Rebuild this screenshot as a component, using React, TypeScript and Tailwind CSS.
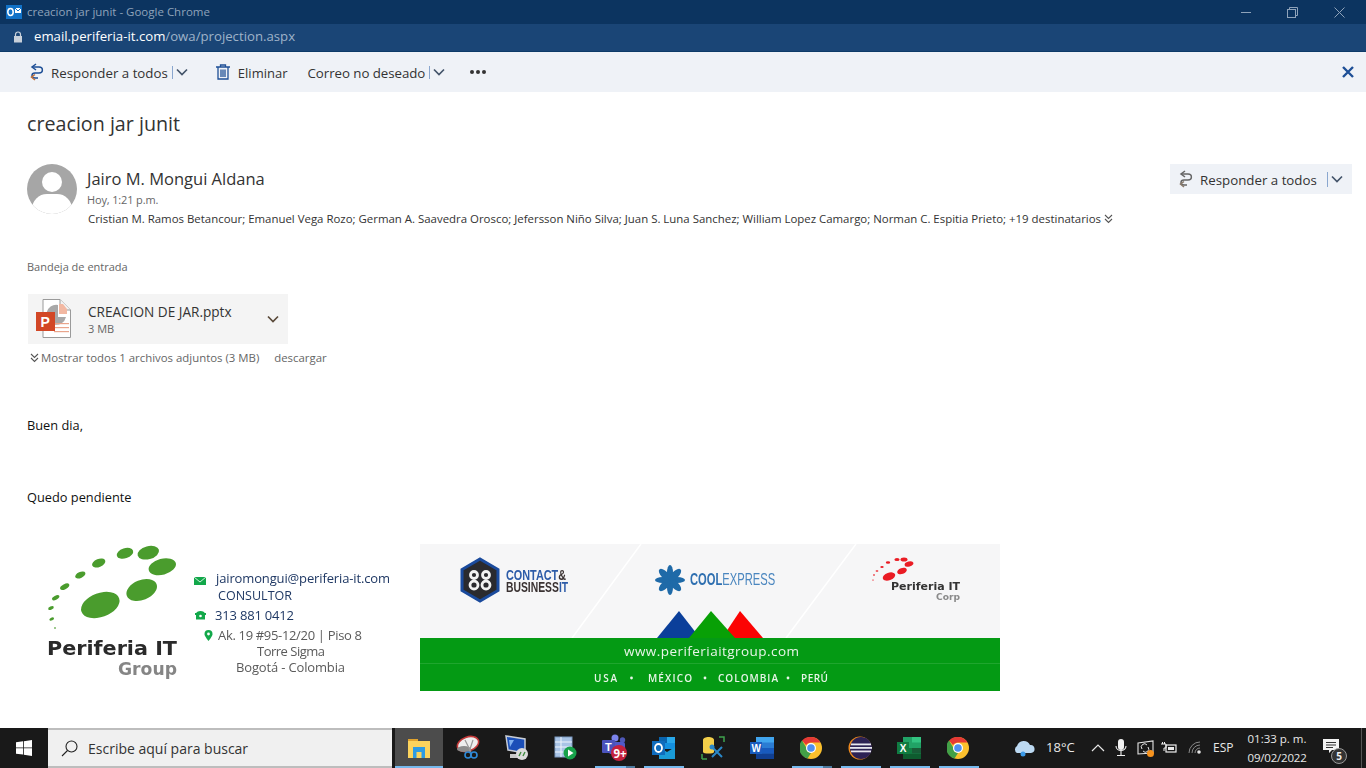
import React from "react";

const F = "[font-family:'Open_Sans','Noto_Sans',sans-serif]";

function ReplyAll({ c1 = "#1e4f96", c2 = "#c0703a" }: { c1?: string; c2?: string }) {
  return (
    <svg width="16" height="18" viewBox="0 0 16 18" fill="none" strokeWidth="1.5">
      <path d="M7 1 L3 4 L7 7" stroke={c1} />
      <path d="M3.500 4 H10 C14.500 4 14.500 10 10 10 H6 C2 10 2 15 6 15 H9" stroke={c1} />
      <path d="M6 11.500 L2.500 14 L6 17" stroke={c2} />
    </svg>
  );
}

function Chevron({ color = "#44546a", w = 12 }: { color?: string; w?: number }) {
  return (
    <svg width={w} height="8" viewBox="0 0 12 8" fill="none" stroke={color} strokeWidth="1.7">
      <path d="M1 1.500 L6 6.500 L11 1.500" />
    </svg>
  );
}

function DoubleChevron({ color = "#555" }: { color?: string }) {
  return (
    <svg width="9" height="10" viewBox="0 0 9 10" fill="none" stroke={color} strokeWidth="1.100">
      <path d="M1 1 L4.500 4.500 L8 1" />
      <path d="M1 5 L4.500 8.500 L8 5" />
    </svg>
  );
}

function PptIcon() {
  return (
    <svg width="36" height="40" viewBox="0 0 36 40">
      <path d="M7 .5 H24 L34.500 11 V38.500 H7 Z" fill="#fff" stroke="#9a9a9a" />
      <path d="M24 .5 V11 H34.500" fill="#f3f3f3" stroke="#9a9a9a" />
      <path d="M22 6 A10 10 0 1 0 30 18 H22 Z" fill="#a8a8a8" />
      <path d="M23 5 H27 L31 10 V15 H23 Z" fill="#f2b8a2" />
      <rect x="18" y="24" width="15" height="1.200" fill="#e9a58c" />
      <rect x="18" y="28" width="15" height="1.200" fill="#e9a58c" />
      <rect x="18" y="32" width="15" height="1.200" fill="#e9a58c" />
      <rect x="0" y="13" width="19" height="19" fill="#d24726" />
      <text x="4.500" y="27.500" fontSize="14" fontWeight="700" fill="#fff" fontFamily="'Liberation Sans',sans-serif">P</text>
    </svg>
  );
}

function Signature() {
  const green = "#4a9c2d";
  const ell: [number, number, number, number, number][] = [
    [100.3, 605, 20, 12, -20],
    [141.7, 590, 16, 10, -22],
    [162.3, 566.7, 14, 8, -15],
    [148.3, 552.7, 11, 6.5, -15],
    [125, 553.3, 8.5, 5, -18],
    [98.7, 563, 7, 4, -22],
    [80.3, 575, 5.5, 3, -25],
    [64.7, 586.7, 5, 2.5, -28],
    [55.7, 597.7, 4, 2, -28],
    [51, 608, 3, 1.7, -25],
    [51.7, 619, 2.5, 1.5, -25],
    [55, 628, 1, 0.8, 0],
  ];
  return (
    <svg width="390" height="160" viewBox="27 535 390 160" className="shrink-0 blur-[0.4px]">
      {ell.map(([x, y, rx, ry, r], i) => (
        <ellipse key={i} cx={x} cy={y} rx={rx} ry={ry} fill={green} transform={`rotate(${r} ${x} ${y})`} />
      ))}
      <g fontFamily="'DejaVu Sans',sans-serif" fontWeight="700">
        <text x="47" y="655" fontSize="20" fill="#2a2a2a" textLength="130" lengthAdjust="spacingAndGlyphs">Periferia IT</text>
        <text x="118" y="675" fontSize="18" fill="#858585" textLength="59" lengthAdjust="spacingAndGlyphs">Group</text>
      </g>
      <g fontFamily="'Open Sans',sans-serif">
        <text x="216" y="583" fontSize="13" fill="#1f3864" textLength="174">jairomongui@periferia-it.com</text>
        <text x="218" y="600" fontSize="12.5" fill="#1f3864" textLength="74">CONSULTOR</text>
        <text x="215" y="620" fontSize="13" fill="#1f3864" textLength="79">313 881 0412</text>
        <text x="218" y="640" fontSize="13" fill="#5a5a5a" textLength="144">Ak. 19 #95-12/20 | Piso 8</text>
        <text x="257" y="656" fontSize="13" fill="#5a5a5a" textLength="68">Torre Sigma</text>
        <text x="236" y="672" fontSize="13" fill="#5a5a5a" textLength="109">Bogotá - Colombia</text>
      </g>
      <rect x="194" y="577" width="12" height="8" fill="#12a84a" />
      <path d="M194 577 L200 582 L206 577" fill="none" stroke="#fff" strokeWidth="0.8" />
      <path d="M196 614 C196 610 205 610 205 614 L205 619.500 H196 Z M195 613 H206 V615 H195 Z" fill="#12a84a" />
      <circle cx="200.500" cy="616" r="1.300" fill="#fff" />
      <path d="M208.500 641 C205 636.500 204.500 635 204.500 634 A4 4 0 0 1 212.500 634 C212.500 635 212 636.500 208.500 641 Z" fill="#12a84a" />
      <circle cx="208.500" cy="634" r="1.400" fill="#fff" />
    </svg>
  );
}

function Banner() {
  const petals = [0, 45, 90, 135, 180, 225, 270, 315];
  return (
    <svg width="580" height="147" viewBox="420 544 580 147" className="shrink-0 blur-[0.35px]">
      <rect x="420" y="544" width="580" height="147" fill="#f6f6f7" />
      <path d="M641 544 L572 638 M856 544 L786 638" stroke="#fff" strokeWidth="1.500" />
      <path d="M679 611 L657 638 H700 Z" fill="#0b3f9a" />
      <path d="M740 611 L722 638 H763 Z" fill="#fb0303" />
      <path d="M711 611 L689 638 H735 Z" fill="#08a006" />
      <rect x="420" y="638" width="580" height="53" fill="#049a14" />
      <rect x="420" y="663" width="580" height="1" fill="#1fa62e" />
      <path d="M480 559 L498 569.500 V590.500 L480 601 L462 590.500 V569.500 Z" fill="#2a2a2e" stroke="#1a4a9c" strokeWidth="3" />
      <g fill="none" stroke="#f2f2f2" strokeWidth="2.800">
        <circle cx="474" cy="575" r="3.500" />
        <circle cx="474" cy="585" r="4" />
        <circle cx="486" cy="575" r="3.500" />
        <circle cx="486" cy="585" r="4" />
      </g>
      <g fontFamily="'Liberation Sans',sans-serif" fontSize="14" fontWeight="700">
        <text transform="translate(506 579.500) scale(0.776 1)">
          <tspan fill="#2d5ca8">CONTACT</tspan>
          <tspan fill="#3a3232">&amp;</tspan>
        </text>
        <text transform="translate(506 591.500) scale(0.74 1)">
          <tspan fill="#3a3232">BUSINESS</tspan>
          <tspan fill="#2d5ca8">IT</tspan>
        </text>
      </g>
      {petals.map((r) => (
        <ellipse key={r} cx="677.500" cy="580" rx="7.500" ry={r % 90 === 0 ? 3 : 3.6} fill="#1f6aa8" transform={`rotate(${r} 670 580)`} />
      ))}
      <text transform="translate(690 585) scale(0.7 1)" fontFamily="'Liberation Sans',sans-serif" fontSize="16">
        <tspan fontWeight="700" fill="#2e6fb0">COOL</tspan>
        <tspan fill="#4a86bf">EXPRESS</tspan>
      </text>
      <g fill="#ea1c24">
        <ellipse cx="889" cy="576.500" rx="6.500" ry="3.700" transform="rotate(-20 889 576.500)" />
        <ellipse cx="902" cy="571" rx="5" ry="3" transform="rotate(-20 902 571)" />
        <ellipse cx="909" cy="564" rx="4.500" ry="2.500" transform="rotate(-15 909 564)" />
        <ellipse cx="904" cy="559.500" rx="3.500" ry="2" />
        <ellipse cx="897" cy="559.500" rx="2.600" ry="1.500" />
        <ellipse cx="888" cy="562.500" rx="2.200" ry="1.200" />
        <ellipse cx="882" cy="567" rx="1.700" ry="1" />
        <ellipse cx="877" cy="571" rx="1.400" ry="0.800" />
        <ellipse cx="874" cy="575" rx="1" ry="0.700" />
        <ellipse cx="873" cy="580" rx="0.800" ry="0.600" />
      </g>
      <g fontFamily="'DejaVu Sans',sans-serif" fontWeight="700">
        <text x="891" y="589.500" fontSize="11" fill="#333" textLength="69" lengthAdjust="spacingAndGlyphs">Periferia IT</text>
        <text x="936" y="600" fontSize="9.500" fill="#8a8a8a" textLength="24" lengthAdjust="spacingAndGlyphs">Corp</text>
      </g>
      <g fontFamily="'Open Sans',sans-serif" fill="#e8f5e8" fontWeight="500">
        <text x="624" y="656" fontSize="13.500" textLength="175">www.periferiaitgroup.com</text>
      </g>
      <g fontFamily="'Open Sans',sans-serif" fill="#e8f5e8" fontWeight="600" fontSize="10">
        <text x="594" y="682" textLength="23">USA</text>
        <text x="648" y="682" textLength="44">MÉXICO</text>
        <text x="718" y="682" textLength="60">COLOMBIA</text>
        <text x="801" y="682" textLength="27">PERÚ</text>
      </g>
      <g fill="#e8f5e8">
        <circle cx="631.500" cy="678" r="1.400" />
        <circle cx="705" cy="678" r="1.400" />
        <circle cx="788" cy="678" r="1.400" />
      </g>
    </svg>
  );
}

function TbIcon({ children, on, wide }: { children: React.ReactNode; on?: boolean; wide?: boolean }) {
  return (
    <div className="relative flex h-10 w-[49.1px] shrink-0 items-center justify-center">
      {children}
      {on && <div className="absolute bottom-0 left-[5px] h-[2px] w-[40px] bg-[#76b9ed]" />}
      {wide && <div className="absolute bottom-0 left-[36px] h-[2px] w-[9px] bg-[#4d7a9e]" />}
    </div>
  );
}

const Icons = {
  snip: (
    <svg width="24" height="26" viewBox="0 0 24 26">
      <ellipse cx="12" cy="9" rx="11" ry="7" transform="rotate(-20 12 9)" fill="#eee" stroke="#c43a3a" strokeWidth="1.600" />
      <ellipse cx="8" cy="14" rx="7" ry="3" fill="#8c8c8c" />
      <path d="M9 5 L15 17 M17 5 L13 17" stroke="#999" strokeWidth="1.200" />
      <circle cx="12" cy="20" r="3" fill="none" stroke="#2e8ad8" strokeWidth="1.600" />
      <circle cx="18" cy="20" r="3" fill="none" stroke="#2e8ad8" strokeWidth="1.600" />
    </svg>
  ),
  rdp: (
    <svg width="24" height="26" viewBox="0 0 24 26">
      <path d="M1 1 L20 4 V18 L3 15 Z" fill="#1b4fb8" stroke="#c8cdd5" strokeWidth="1.500" />
      <path d="M4 5 L9 5 L5 12 Z" fill="#7fb0f0" />
      <path d="M5 19 H14 V23 H5 Z" fill="#c9c9c9" />
      <circle cx="17" cy="19" r="6" fill="#dcdcdc" />
      <path d="M14 21 L16 17 M18 21 L20 17" stroke="#3f8a3f" strokeWidth="1.400" />
    </svg>
  ),
  sheet: (
    <svg width="24" height="24" viewBox="0 0 24 24">
      <rect x="1" y="1" width="17" height="20" fill="#a9c4e6" stroke="#7d99bf" />
      <path d="M1 6 H18 M1 11 H18 M1 16 H18 M7 1 V21" stroke="#eef4fb" />
      <circle cx="16" cy="17" r="6.500" fill="#17a24a" />
      <path d="M14 13.500 L19.500 17 L14 20.500 Z" fill="#fff" />
    </svg>
  ),
  teams: (
    <svg width="28" height="28" viewBox="0 0 28 28">
      <circle cx="14" cy="4" r="3.500" fill="#7b83eb" />
      <circle cx="21.500" cy="6" r="2.700" fill="#4f58b8" />
      <rect x="8" y="8" width="16" height="12" rx="2" fill="#5059c9" />
      <rect x="1" y="6" width="13" height="13" rx="1" fill="#4b53bc" />
      <text x="4" y="16.500" fontSize="11" fontWeight="700" fill="#fff" fontFamily="'Liberation Sans',sans-serif">T</text>
      <circle cx="18" cy="19" r="8" fill="#c4213e" />
      <text x="12.500" y="23.500" fontSize="11.500" fontWeight="700" fill="#fff" fontFamily="'Open Sans',sans-serif">9+</text>
    </svg>
  ),
  outlook: (
    <svg width="24" height="24" viewBox="0 0 24 24">
      <rect x="7" y="1" width="16" height="12" fill="#1490df" />
      <rect x="7" y="1" width="8" height="6" fill="#0a64ad" />
      <rect x="15" y="1" width="8" height="6" fill="#28a8ea" />
      <path d="M7 11 L15 16 L23 11 V23 H7 Z" fill="#1a9bd7" />
      <rect x="0" y="5" width="13" height="14" fill="#0f6cbd" />
      <ellipse cx="6.500" cy="12" rx="3.500" ry="4" fill="none" stroke="#fff" strokeWidth="1.800" />
    </svg>
  ),
  db: (
    <svg width="24" height="24" viewBox="0 0 24 24">
      <path d="M2 4 C2 0 13 0 13 4 V16 C13 18 2 18 2 16 Z" fill="#f3cf4a" />
      <path d="M1 23 V18 M1 23 H6 M18 1 H23 V6" fill="none" stroke="#3fa34d" strokeWidth="1.500" />
      <path d="M11 21 L21 11 M11 11 L21 21" stroke="#2a88c8" strokeWidth="2" />
      <circle cx="11" cy="11" r="2.500" fill="#2a88c8" />
    </svg>
  ),
  word: (
    <svg width="24" height="22" viewBox="0 0 24 22">
      <rect x="6" y="0" width="18" height="22" fill="#2b7cd3" />
      <rect x="6" y="0" width="18" height="5.500" fill="#41a5ee" />
      <rect x="6" y="11" width="18" height="5.500" fill="#185abd" />
      <rect x="6" y="16.500" width="18" height="5.500" fill="#103f91" />
      <rect x="0" y="5" width="12" height="12" fill="#1a5cbd" />
      <text x="1.500" y="15" fontSize="10" fontWeight="700" fill="#fff" fontFamily="'Liberation Sans',sans-serif">W</text>
    </svg>
  ),
  excel: (
    <svg width="24" height="22" viewBox="0 0 24 22">
      <rect x="6" y="0" width="18" height="22" fill="#21a366" />
      <rect x="15" y="0" width="9" height="5.500" fill="#33c481" />
      <rect x="6" y="11" width="9" height="5.500" fill="#107c41" />
      <rect x="15" y="11" width="9" height="5.500" fill="#185c37" />
      <rect x="6" y="16.500" width="18" height="5.500" fill="#0e5c2f" />
      <rect x="0" y="5" width="12" height="12" fill="#107c41" />
      <text x="2.800" y="15" fontSize="10" fontWeight="700" fill="#fff" fontFamily="'Liberation Sans',sans-serif">X</text>
    </svg>
  ),
  chrome: (
    <svg width="22" height="22" viewBox="0 0 22 22">
      <circle cx="11" cy="11" r="11" fill="#fbc02d" />
      <path d="M11 0 A11 11 0 0 1 20.500 5.500 H11 A5.500 5.500 0 0 0 6 8 L2 3.500 A11 11 0 0 1 11 0 Z" fill="#e53935" />
      <path d="M2 3.500 L6.500 11 A5 5 0 0 0 11 16 L7.500 21.500 A11 11 0 0 1 2 3.500 Z" fill="#43a047" />
      <circle cx="11" cy="11" r="5" fill="#fff" />
      <circle cx="11" cy="11" r="3.800" fill="#4f8ff0" />
    </svg>
  ),
  eclipse: (
    <svg width="24" height="24" viewBox="0 0 24 24">
      <circle cx="12" cy="12" r="11.500" fill="#f08a1d" />
      <circle cx="13" cy="12" r="11" fill="#2c2255" />
      <rect x="3" y="7.500" width="20" height="1.800" fill="#e8e8f0" />
      <rect x="2" y="11" width="22" height="1.800" fill="#e8e8f0" />
      <rect x="3" y="14.500" width="20" height="1.800" fill="#e8e8f0" />
    </svg>
  ),
};

function TrayIcons() {
  return (
    <div className="flex h-10 flex-1 items-center text-[#e8e8e8]">
      <svg width="24" height="18" viewBox="0 0 24 18" className="ml-[29px]">
        <path d="M5 14 A4 4 0 0 1 5 7 A7 7 0 0 1 18 6 A4 4 0 0 1 19 14 Z" fill="#bcd9f2" />
        <circle cx="11" cy="15" r="2.500" fill="#3b9ae8" />
      </svg>
      <span className="ml-[10px] w-[30px] text-[13px]">18°C</span>
      <svg width="14" height="8" viewBox="0 0 14 8" fill="none" stroke="#e8e8e8" strokeWidth="1.200" className="ml-[15px]">
        <path d="M1 7 L7 1 L13 7" />
      </svg>
      <svg width="12" height="18" viewBox="0 0 12 18" className="ml-[10px]">
        <rect x="3" y="0" width="6" height="11" rx="3" fill="#f2f2f2" />
        <path d="M1 7 C1 13 11 13 11 7 M6 12 V16 M2 16.500 H10" fill="none" stroke="#f2f2f2" strokeWidth="1.100" />
      </svg>
      <svg width="18" height="17" viewBox="0 0 18 17" className="ml-[10px]">
        <path d="M1 3 L16 1 V13 L1 14 Z" fill="none" stroke="#e6e6e6" strokeWidth="1.100" />
        <path d="M5 9 A3 3 0 0 1 10 5 M11 7 A3 3 0 0 1 6 11" fill="none" stroke="#e6e6e6" />
        <circle cx="13.500" cy="13.500" r="3.500" fill="#f7931e" />
      </svg>
      <svg width="16" height="12" viewBox="0 0 16 12" className="ml-[6px]">
        <rect x="5" y="3" width="10" height="7" fill="none" stroke="#eee" strokeWidth="1.200" />
        <rect x="7" y="5" width="6" height="3" fill="#eee" />
        <path d="M0 2 H5 V6 H3 V9 M1.500 0 V2 M3.500 0 V2" fill="none" stroke="#eee" />
      </svg>
      <svg width="14" height="14" viewBox="0 0 14 14" fill="none" stroke="#8a8a8a" strokeWidth="1" className="ml-[11px]">
        <path d="M1 12 A11 11 0 0 1 12 1 M4 12 A8 8 0 0 1 12 4 M7 12 A5 5 0 0 1 12 7" />
        <circle cx="11" cy="11" r="1.800" fill="#e6e6e6" stroke="none" />
      </svg>
      <span className="ml-[11px] w-[22px] text-[12px]">ESP</span>
      <div className="ml-[12px] flex w-[60px] flex-col items-center text-[11.500px] leading-[19px]">
        <span className="whitespace-nowrap">01:33 p. m.</span>
        <span className="whitespace-nowrap tracking-[-0.2px]">09/02/2022</span>
      </div>
      <div className="relative ml-[16px] h-10 w-[26px]">
        <svg width="17" height="15" viewBox="0 0 17 15" className="absolute left-0 top-[11px]">
          <path d="M0 0 H16 V11 H9 L6 14 V11 H0 Z" fill="#f4f4f4" />
          <path d="M3 3.500 H13 M3 6 H13 M3 8.500 H10" stroke="#333" />
        </svg>
        <div className="absolute left-[8px] top-[20px] flex h-[16px] w-[16px] items-center justify-center rounded-full border border-[#999] bg-[#333] text-[10px] font-bold text-[#eee]">5</div>
      </div>
      <div className="ml-[12px] h-10 w-px bg-[#555]" />
    </div>
  );
}

export default function App() {
  return (
    <div className={`flex h-screen w-full flex-col overflow-hidden bg-white ${F}`}>
      <div className="flex h-6 shrink-0 items-center bg-[#0c3460]">
        <svg width="16" height="16" viewBox="0 0 16 16" className="ml-[6px]">
          <rect x="0" y="1" width="16" height="14" fill="#1172c8" />
          <rect x="9" y="4" width="6" height="5" fill="#fff" />
          <path d="M9 4 L12 7 L15 4" fill="none" stroke="#1172c8" />
          <ellipse cx="4.500" cy="8" rx="2.700" ry="3.500" fill="none" stroke="#fff" strokeWidth="1.500" />
        </svg>
        <span className="ml-[5px] text-[11.500px] text-[#8fa3ba]">creacion jar junit - Google Chrome</span>
        <div className="ml-auto flex items-center gap-[36px] pr-[21px]">
          <div className="h-px w-[10px] bg-[#8fa3ba]" />
          <svg width="11" height="11" viewBox="0 0 11 11" fill="none" stroke="#8fa3ba">
            <rect x="0.500" y="2.500" width="8" height="8" />
            <path d="M2.500 2.500 V0.500 H10.500 V8.500 H8.500" />
          </svg>
          <svg width="11" height="11" viewBox="0 0 11 11" fill="none" stroke="#8fa3ba">
            <path d="M0.500 0.500 L10.500 10.500 M10.500 0.500 L0.500 10.500" />
          </svg>
        </div>
      </div>
      <div className="flex h-[28px] shrink-0 items-center border-b border-[#0d3a68] bg-[#1a4576] pb-[2px]">
        <svg width="10" height="12" viewBox="0 0 10 12" className="ml-[13px]">
          <rect x="1" y="5" width="8" height="6.500" fill="#c8d0da" />
          <path d="M2.500 5 V3.500 A2.500 2.500 0 0 1 7.500 3.500 V5" fill="none" stroke="#c8d0da" strokeWidth="1.200" />
        </svg>
        <span className="ml-[11px] text-[13.200px] text-white">email.periferia-it.com<span className="text-[#9fb3c9]">/owa/projection.aspx</span></span>
      </div>

      <div className="flex h-10 shrink-0 items-center bg-[#eff2f7] text-[13.300px] text-[#333]">
        <div className="ml-[29px]"><ReplyAll /></div>
        <span className="ml-[6px] pt-[3px]">Responder a todos</span>
        <div className="ml-[4px] h-[13px] w-px bg-[#8aa7cf]" />
        <div className="ml-[3px]"><Chevron /></div>
        <svg width="14" height="16" viewBox="0 0 14 16" className="ml-[28px]" fill="none" stroke="#1e4f96" strokeWidth="1.300">
          <path d="M0 3 H14 M4.500 3 V1 H9.500 V3 M2 3 V15 H12 V3 M5 5.500 V13 M7 5.500 V13 M9 5.500 V13" />
        </svg>
        <span className="ml-[8px] pt-[3px] text-[13px]">Eliminar</span>
        <span className="ml-[20px] pt-[3px] tracking-[-0.05px]">Correo no deseado</span>
        <div className="ml-[4px] h-[13px] w-px bg-[#8aa7cf]" />
        <div className="ml-[3px]"><Chevron /></div>
        <div className="ml-[25px] flex gap-[2px]">
          <div className="h-[4px] w-[4px] rounded-full bg-[#333]" />
          <div className="h-[4px] w-[4px] rounded-full bg-[#333]" />
          <div className="h-[4px] w-[4px] rounded-full bg-[#333]" />
        </div>
        <svg width="12" height="12" viewBox="0 0 12 12" className="ml-auto mr-[12px]" stroke="#1e4f96" strokeWidth="2.400">
          <path d="M1 1 L11 11 M11 1 L1 11" />
        </svg>
      </div>

      <div className="flex min-h-0 flex-1 flex-col pl-[27px]">
        <div className="mt-[17px] h-[29px] text-[19.700px] leading-[29px] text-[#333]">creacion jar junit</div>
        <div className="mt-[26px] flex items-start">
          <div className="relative h-[50px] w-[50px] shrink-0 overflow-hidden rounded-full bg-[#a6a6a6]">
            <div className="absolute left-[15px] top-[8px] h-[20px] w-[20px] rounded-full bg-white" />
            <div className="absolute left-[5px] top-[30px] h-[30px] w-[40px] rounded-full bg-white" />
          </div>
          <div className="ml-[10px] min-w-0 flex-1 pt-[4px]">
            <div className="text-[16.500px] leading-[22px] text-[#333]">Jairo M. Mongui Aldana</div>
            <div className="mt-[2px] text-[11px] leading-[16px] tracking-[-0.15px] text-[#666]">Hoy, 1:21 p.m.</div>
            <div className="ml-px mt-[2px] flex items-center gap-[3px] whitespace-nowrap text-[11.430px] leading-[18px] text-[#333]">
              <span>Cristian M. Ramos Betancour; Emanuel Vega Rozo; German A. Saavedra Orosco; Jefersson Niño Silva; Juan S. Luna Sanchez; William Lopez Camargo; Norman C. Espitia Prieto; +19 destinatarios</span>
              <DoubleChevron />
            </div>
          </div>
          <div className="mr-[14px] flex h-[30px] w-[182px] shrink-0 items-center bg-[#eff2f7] text-[13.300px] text-[#333]">
            <div className="ml-[8px]"><ReplyAll c1="#666" c2="#8a7a6a" /></div>
            <span className="ml-[6px] whitespace-nowrap pt-[3px]">Responder a todos</span>
            <div className="ml-[10px] h-[15px] w-px bg-[#8aa7cf]" />
            <div className="ml-[3px]"><Chevron /></div>
          </div>
        </div>

        <div className="mt-[30px] text-[11px] leading-[18px] text-[#666]">Bandeja de entrada</div>
        <div className="ml-px mt-[18px] flex h-[50px] w-[260px] items-center bg-[#f4f4f4]">
          <div className="ml-[8px]"><PptIcon /></div>
          <div className="ml-[16px] flex-1 pt-[2px]">
            <div className="text-[13.600px] leading-[18px] text-[#333]">CREACION DE JAR.pptx</div>
            <div className="text-[11px] leading-[16px] text-[#666]">3 MB</div>
          </div>
          <div className="mr-[9px]"><Chevron color="#5a4a3a" /></div>
        </div>
        <div className="ml-[3px] mt-[6px] flex items-center text-[11.400px] leading-[16px] text-[#666]">
          <DoubleChevron />
          <span className="ml-[2px]">Mostrar todos 1 archivos adjuntos (3 MB)</span>
          <span className="ml-[15px]">descargar</span>
        </div>

        <div className="mt-[50px] text-[12.800px] leading-[18px] text-[#111]">Buen dia,</div>
        <div className="mt-[54px] text-[12.800px] leading-[18px] text-[#111]">Quedo pendiente</div>

        <div className="mt-[29px] flex items-start">
          <Signature />
          <div className="ml-[3px] mt-[9px]"><Banner /></div>
        </div>
      </div>

      <div className="absolute bottom-0 left-0 flex h-10 w-full items-center bg-[#191919]">
        <div className="flex h-10 w-12 shrink-0 items-center justify-center">
          <svg width="16" height="16" viewBox="0 0 16 16" fill="#fff">
            <path d="M0 2.300 L7 1.300 V7.500 H0 Z M7.800 1.200 L16 0 V7.500 H7.800 Z M0 8.300 H7 V14.600 L0 13.700 Z M7.800 8.300 H16 V16 L7.800 14.800 Z" />
          </svg>
        </div>
        <div className="flex h-10 w-[344px] shrink-0 items-center border-y-2 border-[#bdbdbd] bg-[#f0f0f0]">
          <svg width="17" height="17" viewBox="0 0 17 17" fill="none" stroke="#222" strokeWidth="1.100" className="ml-[13px]">
            <circle cx="10.500" cy="6.500" r="5.500" />
            <path d="M6.500 10.500 L1 16" />
          </svg>
          <span className="ml-[10px] text-[14px] text-[#333]">Escribe aquí para buscar</span>
        </div>
        <div className="relative ml-[3px] flex h-10 w-12 shrink-0 items-center justify-center bg-[#4c4c4c]">
          <svg width="22" height="19" viewBox="0 0 22 19">
            <rect x="0" y="0" width="10" height="4" fill="#e0a32e" />
            <rect x="0" y="2" width="22" height="17" fill="#fbd35d" />
            <rect x="5" y="8" width="12" height="11" fill="#2d9be3" />
            <rect x="8.500" y="13" width="5" height="6" fill="#fbd35d" />
          </svg>
          <div className="absolute bottom-0 left-0 h-[2px] w-full bg-[#76b9ed]" />
        </div>
        <TbIcon>{Icons.snip}</TbIcon>
        <TbIcon>{Icons.rdp}</TbIcon>
        <TbIcon>{Icons.sheet}</TbIcon>
        <TbIcon on wide>{Icons.teams}</TbIcon>
        <TbIcon on>{Icons.outlook}</TbIcon>
        <TbIcon>{Icons.db}</TbIcon>
        <TbIcon>{Icons.word}</TbIcon>
        <TbIcon on wide>{Icons.chrome}</TbIcon>
        <TbIcon on>{Icons.eclipse}</TbIcon>
        <TbIcon on>{Icons.excel}</TbIcon>
        <TbIcon on>{Icons.chrome}</TbIcon>
        <TrayIcons />
      </div>
    </div>
  );
}
